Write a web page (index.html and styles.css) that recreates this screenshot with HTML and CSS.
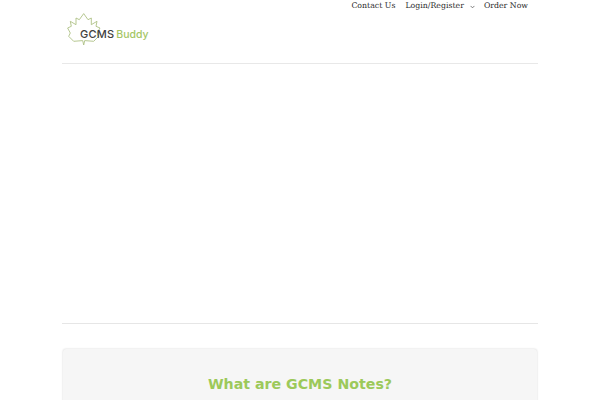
FILE: index.html
```html
<!DOCTYPE html>
<html lang="en">
<head>
<meta charset="utf-8">
<title>GCMS Buddy</title>
<link rel="stylesheet" href="styles.css">
</head>
<body>
<div class="page">
  <header class="header">
    <div class="logo">
      <svg class="leaf" viewBox="0 0 34 32" width="34" height="32" aria-hidden="true">
        <path d="M16.7 0.6 L12.3 6.7 L9 5 L9 11.7 L3.3 8.3 L4.3 13.3 L0.6 15 L3.3 20 L1.7 23.3 L6.7 28.3 L15.7 27.6 L16.7 32 L17.7 27.6 L26.7 28.3 L31.7 23.3 L30 20 L33 15 L29 13.3 L30 8.3 L24.3 11.7 L24.3 5 L21 6.7 Z" fill="none" stroke="#aec184" stroke-width="0.9" stroke-linejoin="miter"/>
      </svg>
      <span class="logo-text"><span class="logo-g">GCMS</span><span class="logo-b">Buddy</span></span>
    </div>
    <nav class="nav">
      <a>Contact Us</a>
      <a class="has-caret">Login/Register
        <svg class="caret" viewBox="0 0 6 4" width="5" height="4" aria-hidden="true"><path d="M0.7 0.7 L3 3 L5.3 0.7" fill="none" stroke="#555" stroke-width="0.9"/></svg>
      </a>
      <a>Order Now</a>
    </nav>
  </header>
  <div class="hero"></div>
  <section class="card">
    <h2>What are GCMS Notes?</h2>
  </section>
</div>
</body>
</html>
```
FILE: styles.css
```css
html, body { margin: 0; padding: 0; background: #fff; height: 400px; overflow: hidden; }
.page { width: 476px; margin: 0 auto 0 62px; }
.header { height: 63px; border-bottom: 1px solid #e8e8e8; display: flex; justify-content: space-between; align-items: flex-start; }
.logo { display: flex; align-items: center; margin: 13px 0 0 5px; height: 32px; }
.leaf { flex: none; }
.logo-text { font-family: "Inter", "Liberation Sans", sans-serif; font-size: 11px; margin: 9px 0 0 -21px; }
.logo-g { color: #3f4140; font-weight: 500; letter-spacing: 0.2px; }
.logo-b { color: #a5c665; font-weight: 500; font-size: 10.5px; margin-left: 2px; }
.nav { display: flex; gap: 10px; padding: 1px 10px 0 0; font-family: "DejaVu Serif", serif; font-size: 7.8px; line-height: 10px; color: #2c2c2c; }
.has-caret { display: flex; align-items: center; gap: 6px; margin-right: -1px; }
.caret { margin-top: 1px; }
.hero { height: 259px; border-bottom: 1px solid #e6e6e6; }
.card { margin: 25px 1px 0; height: 60px; background: #f6f6f6; border-radius: 3px; box-shadow: 0 0 2px rgba(0,0,0,0.2); text-align: center; }
.card h2 { margin: 0; padding-top: 25px; font-family: "DejaVu Sans", sans-serif; font-weight: 700; font-size: 14.2px; line-height: 20px; color: #9cc95a; }
```
